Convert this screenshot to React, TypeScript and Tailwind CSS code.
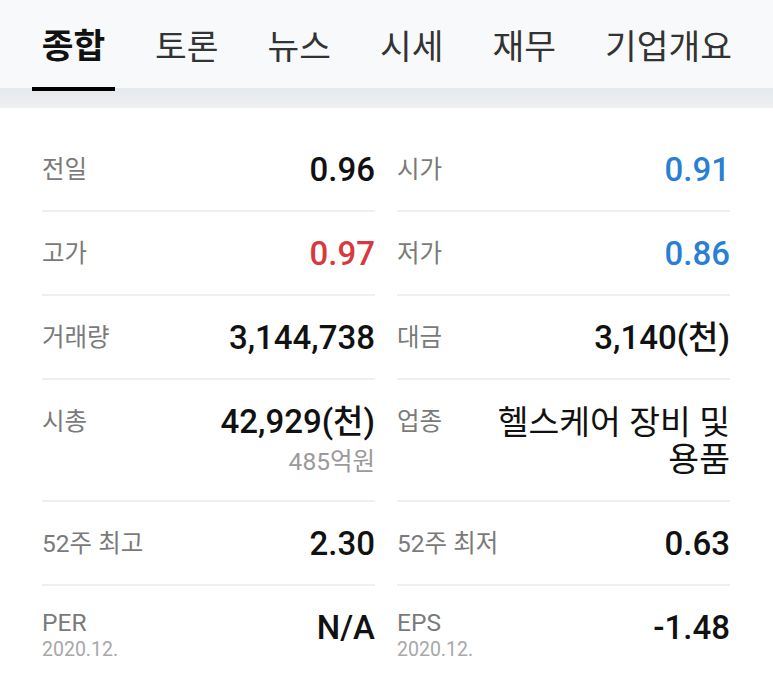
import type { ReactNode } from "react";

const FONT = { fontFamily: 'Roboto, "Noto Sans CJK KR", sans-serif' };

const tabs = ["종합", "토론", "뉴스", "시세", "재무", "기업개요"];

type Cell = {
  label: string;
  sub?: string;
  value: ReactNode;
  tone?: "red" | "blue";
  extra?: string;
};

const rows: [Cell, Cell][] = [
  [
    { label: "전일", value: "0.96" },
    { label: "시가", value: "0.91", tone: "blue" },
  ],
  [
    { label: "고가", value: "0.97", tone: "red" },
    { label: "저가", value: "0.86", tone: "blue" },
  ],
  [
    { label: "거래량", value: "3,144,738" },
    { label: "대금", value: "3,140(천)" },
  ],
  [
    { label: "시총", value: "42,929(천)", extra: "485억원" },
    { label: "업종", value: "헬스케어 장비 및 용품" },
  ],
  [
    { label: "52주 최고", value: "2.30" },
    { label: "52주 최저", value: "0.63" },
  ],
  [
    { label: "PER", sub: "2020.12.", value: "N/A" },
    { label: "EPS", sub: "2020.12.", value: "-1.48" },
  ],
];

function InfoCell({ cell }: { cell: Cell }) {
  const color =
    cell.tone === "red" ? "text-[#d8393f]" : cell.tone === "blue" ? "text-[#2a7fd4]" : "text-[#111111]";
  const isSector = cell.label === "업종";
  return (
    <div className="flex items-start justify-between border-b-2 border-[#efefef] pt-[24px] pb-[22px]">
      {cell.sub ? (
        <div className="flex flex-col">
          <span className="text-[24.5px] leading-[22px] text-[#7a7a7a] mt-[2px]">{cell.label}</span>
          <span className="text-[19.5px] leading-[24px] text-[#a8a8a8] mt-[4px]">{cell.sub}</span>
        </div>
      ) : (
        <span className="text-[24.5px] leading-[36px] text-[#7a7a7a] whitespace-nowrap">{cell.label}</span>
      )}
      <div className="flex flex-col items-end">
        {isSector ? (
          <span className="text-[33.5px] leading-[37px] text-[#111111] text-right w-[240px]">{cell.value}</span>
        ) : (
          <span className={`text-[33px] leading-[36px] font-medium whitespace-nowrap ${color}`}>{cell.value}</span>
        )}
        {cell.extra && (
          <span className="text-[24.5px] leading-[28px] text-[#9a9a9a] mt-[8px]">{cell.extra}</span>
        )}
      </div>
    </div>
  );
}

export default function App() {
  return (
    <div className="min-h-[677px] w-[773px] bg-white" style={FONT}>
      <div className="bg-[#f8f9fb] h-[88px] flex items-end pl-[32px]">
        {tabs.map((t, i) => (
          <div
            key={t}
            className={`flex flex-col items-center ${i === 0 ? "w-[83px] mr-[40px]" : "mr-[49px]"}`}
          >
            <span
              className={`text-[34.5px] leading-[40px] pb-[21px] whitespace-nowrap ${
                i === 0 ? "font-bold text-[#111111]" : "text-[#333333]"
              }`}
            >
              {t}
            </span>
            {i === 0 && <div className="h-[4px] w-[83px] bg-black -mb-[3px]" />}
          </div>
        ))}
      </div>
      <div className="h-[20px] bg-gradient-to-b from-[#e6e9ec] to-[#eef0f2]" />
      <div className="grid grid-cols-2 gap-x-[22px] pl-[42px] pr-[43px] pt-[20px]">
        {rows.map((r, i) => (
          <div key={i} className="contents">
            <InfoCell cell={r[0]} />
            <InfoCell cell={r[1]} />
          </div>
        ))}
      </div>
    </div>
  );
}
